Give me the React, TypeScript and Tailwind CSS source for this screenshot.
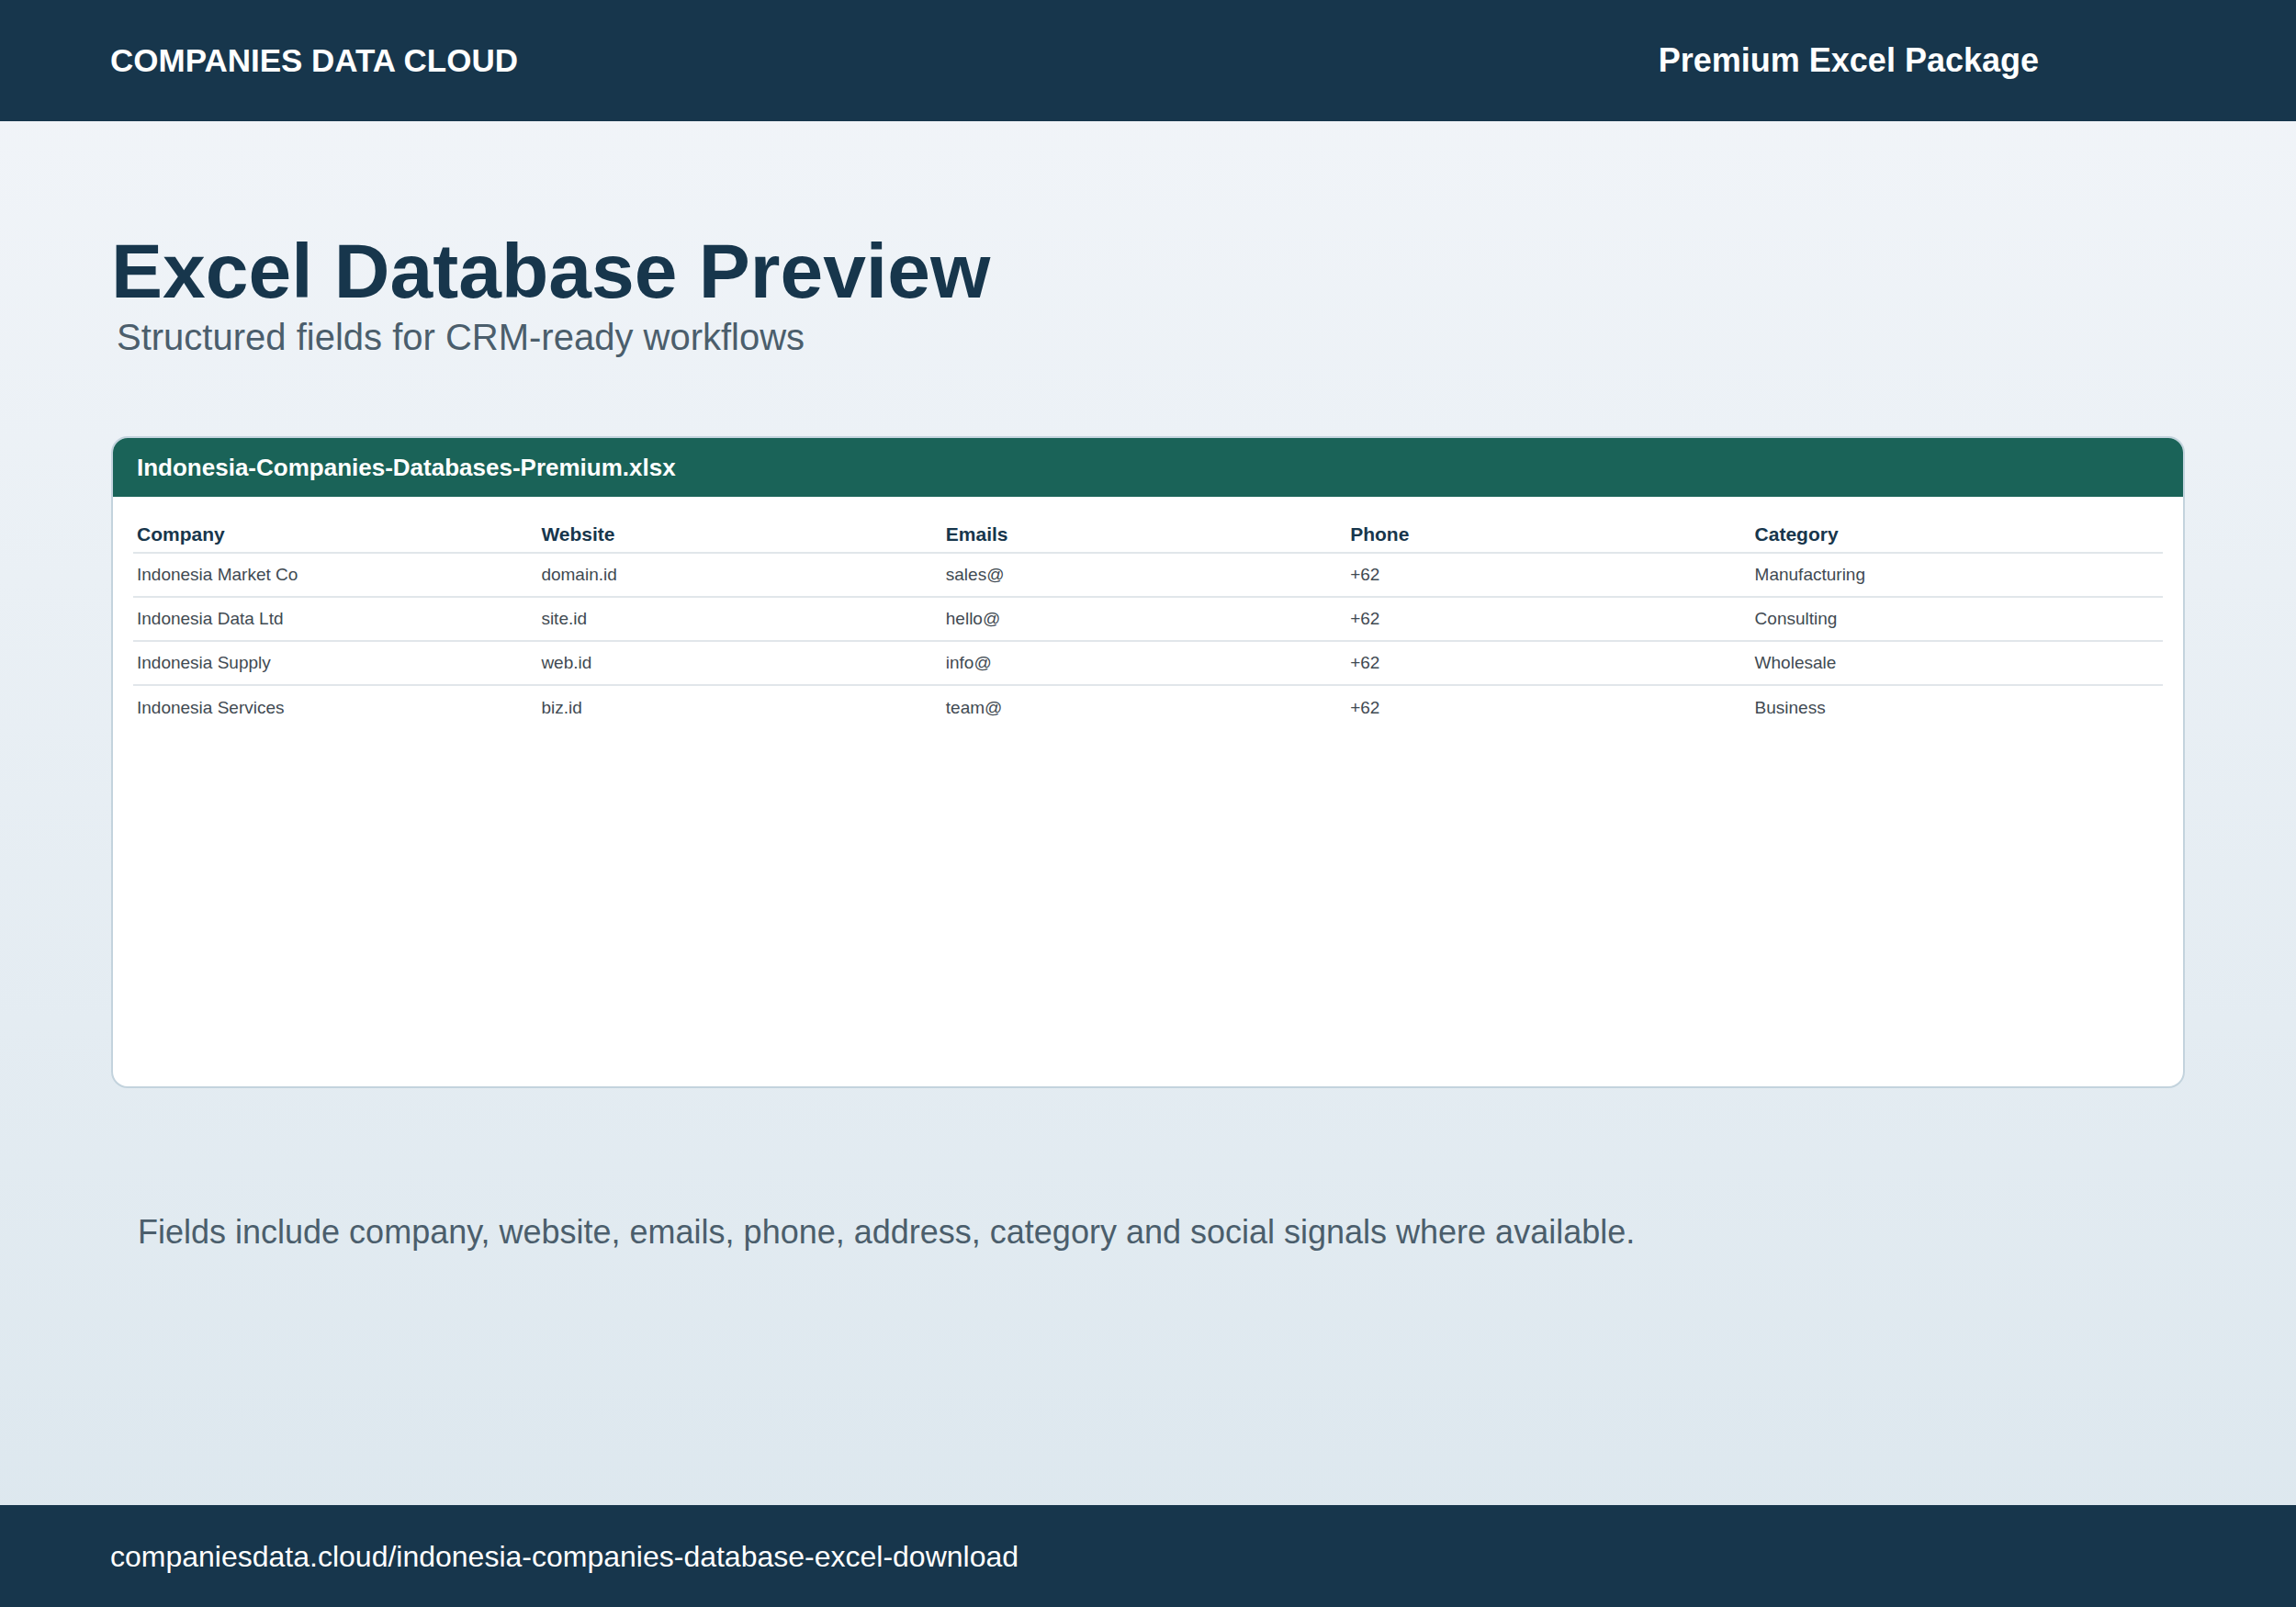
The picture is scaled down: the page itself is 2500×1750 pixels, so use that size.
export default function App() {
  const rows = [
    ["Indonesia Market Co", "domain.id", "sales@", "+62", "Manufacturing"],
    ["Indonesia Data Ltd", "site.id", "hello@", "+62", "Consulting"],
    ["Indonesia Supply", "web.id", "info@", "+62", "Wholesale"],
    ["Indonesia Services", "biz.id", "team@", "+62", "Business"],
  ];
  const heads = ["Company", "Website", "Emails", "Phone", "Category"];
  return (
    <div className="w-[2500px] h-[1750px] flex flex-col bg-gradient-to-b from-[#f2f5f9] to-[#dce7ee]" style={{ fontFamily: '"Liberation Sans", Arial, sans-serif' }}>
      <div className="h-[132px] bg-[#17364c] flex items-center justify-between pl-[120px] pr-[280px] shrink-0">
        <div className="text-white font-bold text-[35px]">COMPANIES DATA CLOUD</div>
        <div className="text-white font-bold text-[36px]">Premium Excel Package</div>
      </div>
      <div className="flex-1 flex flex-col px-[121px]">
        <h1 className="mt-[115px] text-[84px] leading-[96px] font-bold text-[#17364c]">Excel Database Preview</h1>
        <div className="ml-[6px] text-[40px] leading-[48px] text-[#4b5e6c]">Structured fields for CRM-ready workflows</div>
        <div className="mt-[84px] h-[710px] bg-white border-2 border-[#c3d3dd] rounded-[18px] overflow-hidden flex flex-col">
          <div className="h-[64px] bg-[#1a6358] flex items-center pl-[26px] text-white font-bold text-[26px] shrink-0">Indonesia-Companies-Databases-Premium.xlsx</div>
          <div className="px-[22px] pt-[22px]">
            <div className="grid grid-cols-5 h-[40px] items-center border-b-2 border-[#e1e6ea] px-[4px]">
              {heads.map((h) => (
                <div key={h} className="text-[21px] font-bold text-[#17364c]">{h}</div>
              ))}
            </div>
            {rows.map((r, i) => (
              <div key={i} className={`grid grid-cols-5 h-[48px] items-center px-[4px] ${i < 3 ? "border-b-2 border-[#e1e6ea]" : ""}`}>
                {r.map((c, j) => (
                  <div key={j} className="text-[19px] text-[#3f4a52]">{c}</div>
                ))}
              </div>
            ))}
          </div>
        </div>
        <div className="mt-[130px] ml-[29px] text-[36px] text-[#4b5e6c]">Fields include company, website, emails, phone, address, category and social signals where available.</div>
      </div>
      <div className="h-[111px] bg-[#17364c] flex items-center pl-[120px] shrink-0">
        <div className="text-white text-[32px]">companiesdata.cloud/indonesia-companies-database-excel-download</div>
      </div>
    </div>
  );
}
